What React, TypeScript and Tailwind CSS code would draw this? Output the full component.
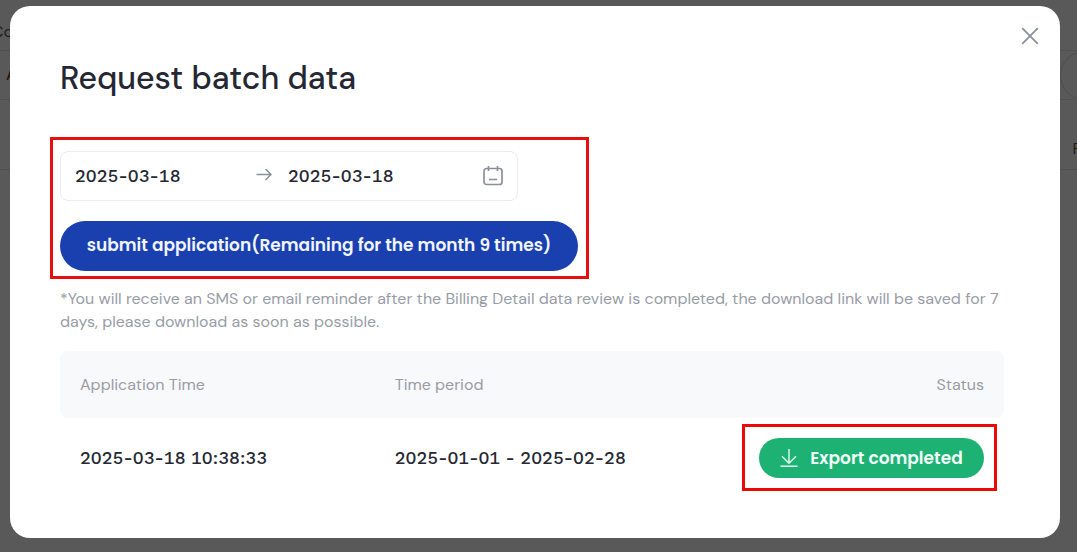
import React from 'react'

const records = [
    { id: 1, time: "2025-03-18 10:38:33", period: "2025-01-01 - 2025-02-28" },
]

const Backdrop = () => {
    return (
        <div className="min-h-screen bg-[#595959] text-[#1d1d20] overflow-hidden" aria-hidden="true">
            <div className="h-[51px] border-b border-[#505050] pt-5">
                <p className="-ml-2 text-base leading-6">Co</p>
            </div>
            <div className="flex h-[49px] items-center justify-between border-b border-[#505050] pl-[6px]">
                <p className="text-base font-medium text-[#2a1208]">A</p>
                <div className="-mr-8 size-[49px] shrink-0 rounded-full border border-[#4d4d4d]" />
            </div>
            <div className="flex h-[70px] items-end justify-end border-b border-[#505050] pb-2">
                <p className="-mr-1 text-base leading-6">F</p>
            </div>
        </div>
    )
}

const CloseIcon = () => (
    <svg width="18" height="18" viewBox="0 0 18 18" fill="none" stroke="#8b909b" strokeWidth="1.8">
        <path d="M1.2 1.2 16.8 16.8M16.8 1.2 1.2 16.8" />
    </svg>
)

const ArrowIcon = () => (
    <svg width="16" height="14" viewBox="0 0 16 14" fill="none" stroke="#8b909b" strokeWidth="1.5">
        <path d="M.5 5.5H15M9.5 0l5.5 5.5L9.500 11" />
    </svg>
)

const CalendarIcon = () => (
    <svg width="20" height="20" viewBox="0 0 20 20" fill="none" stroke="#8b909b" strokeWidth="1.7">
        <rect x="1" y="2.5" width="18" height="16" rx="2.5" />
        <path d="M5.5 0v5M14.5 0v5M6 13.5h8" />
    </svg>
)

const DownloadIcon = () => (
    <svg width="18" height="18" viewBox="0 0 18 18" fill="none" stroke="#e4fbf0" strokeWidth="1.4">
        <path d="M9 0v14M2 7.2l7 7 7-7M.5 17.2h17" />
    </svg>
)

const App = () => {
    return (
        <div className="relative min-h-screen font-['DM_Sans','Inter',sans-serif]">
            <Backdrop />
            <div
                role="dialog"
                aria-labelledby="dialog-title"
                className="absolute inset-x-0 top-[6px] ml-[10px] mr-[17px] rounded-[20px] bg-white pt-[52px] pr-[56px] pb-10 pl-[50px] text-[#252833]"
            >
                <button type="button" aria-label="Close" className="absolute top-[21px] right-[21px]">
                    <CloseIcon />
                </button>
                <h1 id="dialog-title" className="text-[32px] leading-10 font-medium">Request batch data</h1>

                <div className="-ml-[10px] mt-[39px] w-fit border-[3px] border-[#e60f0f] pt-[11px] pr-2 pb-[5px] pl-[7px]">
                    <div className="flex h-[50px] w-[458px] items-center rounded-lg border border-[#ebecef] px-[14px] font-['Work_Sans','Inter',sans-serif] text-lg font-medium tabular-nums">
                        <input
                            type="text"
                            aria-label="Start date"
                            defaultValue="2025-03-18"
                            className="w-[181px] outline-none"
                        />
                        <ArrowIcon />
                        <input
                            type="text"
                            aria-label="End date"
                            defaultValue="2025-03-18"
                            className="ml-4 min-w-0 flex-1 outline-none"
                        />
                        <CalendarIcon />
                    </div>
                    <button type="button" className="mt-5 block h-[50px] w-[518px] rounded-full bg-[#1a40af] font-['Poppins','Inter',sans-serif] text-[17px] font-semibold whitespace-nowrap text-[#f1f5ff]">
                        submit application(Remaining for the month 9 times)
                    </button>
                </div>

                <p className="mt-2 text-base leading-[23px] text-[#989ca6]">
                    *You will receive an SMS or email reminder after the Billing Detail data review is completed, the download link will be saved for 7 days, please download as soon as possible.
                </p>

                <table className="mt-[18px] w-full table-fixed">
                    <thead>
                        <tr className="h-[67px] bg-[#f8f9fb] text-base text-[#989ca6]">
                            <th className="rounded-l-lg px-5 text-left font-normal">Application Time</th>
                            <th className="px-5 text-left font-normal">Time period</th>
                            <th className="rounded-r-lg px-5 text-right font-normal">Status</th>
                        </tr>
                    </thead>
                    <tbody>
                        {records.map((record) => (
                            <tr key={record.id} className="h-20 font-['Work_Sans','Inter',sans-serif] text-lg font-medium whitespace-nowrap tabular-nums">
                                <td className="px-5">{record.time}</td>
                                <td className="px-5">{record.period}</td>
                                <td className="px-5">
                                    <div className="relative ml-auto w-fit">
                                        <button type="button" className="flex h-10 w-[225px] items-center justify-center gap-3 rounded-full bg-[#1db274] font-['Poppins','Inter',sans-serif] text-[17px] font-semibold text-[#f1fff8]">
                                            <DownloadIcon />
                                            Export completed
                                        </button>
                                        <div className="pointer-events-none absolute -top-[14px] -right-[13px] -bottom-[13px] -left-[17px] border-[3px] border-[#ee0909]" />
                                    </div>
                                </td>
                            </tr>
                        ))}
                    </tbody>
                </table>
            </div>
        </div>
    )
}

export default App
